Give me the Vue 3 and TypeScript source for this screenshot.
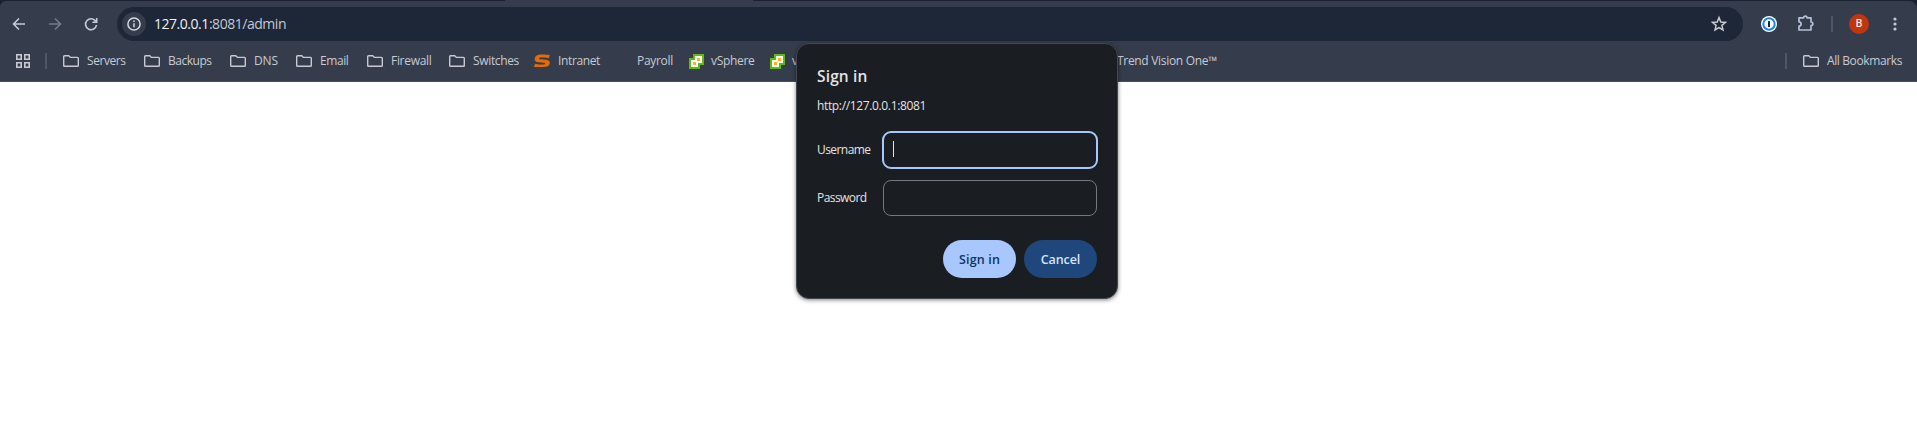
<script setup lang="ts">
interface Bookmark {
  label: string
  icon: 'folder' | 's' | 'vm' | 'none'
  pitch: number
  text: number
}

const bookmarks: Bookmark[] = [
  { label: 'Servers', icon: 'folder', pitch: 81, text: 38.5 },
  { label: 'Backups', icon: 'folder', pitch: 86, text: 43.5 },
  { label: 'DNS', icon: 'folder', pitch: 66, text: 24 },
  { label: 'Email', icon: 'folder', pitch: 71, text: 28.5 },
  { label: 'Firewall', icon: 'folder', pitch: 82, text: 40.5 },
  { label: 'Switches', icon: 'folder', pitch: 85, text: 46 },
  { label: 'Intranet', icon: 's', pitch: 79, text: 42 },
  { label: 'Payroll', icon: 'none', pitch: 76, text: 36 },
  { label: 'vSphere', icon: 'vm', pitch: 81, text: 43.5 },
  { label: 'v', icon: 'vm', pitch: 323, text: 6 },
  { label: 'Trend Vision One™', icon: 'none', pitch: 140, text: 100 },
]

const ctx = document.createElement('canvas').getContext('2d')

// Letter spacing that makes a label as wide as its slot.
function fit(label: string, width: number, size = 12, weight = 400) {
  if (!ctx) return {}
  ctx.font = `${weight} ${size}px "Open Sans"`
  const extra = (width - ctx.measureText(label).width) / label.length
  return { letterSpacing: `${extra.toFixed(3)}px` }
}
</script>

<template>
  <div class="browser">
    <div class="strip"><i class="left"></i><i class="right"></i></div>
    <div class="toolbar">
      <svg class="nav" viewBox="0 0 16 16"><path d="M14 8H3M8 2.5 2.5 8 8 13.5" /></svg>
      <svg class="nav dim" viewBox="0 0 16 16"><path d="M2 8h11M8 2.5 13.5 8 8 13.5" /></svg>
      <svg class="nav reload" viewBox="0 0 16 16"><path d="M12.8 5.4A5.5 5.5 0 1 0 13.5 9M13.7 2v4.2H9.4" /></svg>
      <div class="omnibox">
        <span class="info">
          <svg viewBox="0 0 16 16"><circle cx="8" cy="8" r="6.1" /><path d="M8 7.2v4M8 4.6v1.5" /></svg>
        </span>
        <span class="url" :style="fit('127.0.0.1:8081/admin', 132, 14)"><b>127.0.0.1</b>:8081/admin</span>
        <svg class="star" viewBox="0 0 16 16">
          <path d="M8 1.6 9.8 6l4.7.4-3.6 3 1.1 4.6L8 11.6 4 14l1.1-4.6-3.6-3L6.2 6Z" />
        </svg>
      </div>
      <svg class="onepass" viewBox="0 0 16 16">
        <circle cx="8" cy="8" r="8" fill="#fff" />
        <circle cx="8" cy="8" r="5.7" stroke="#1a85f5" stroke-width="2" />
        <rect x="7" y="5" width="2" height="6" rx=".5" fill="#172333" />
      </svg>
      <svg class="puzzle" viewBox="0 0 18 18">
        <path d="M2 3.8h4.6a1.7 1.7 0 0 1 3.4 0h4v4.2a1.7 1.7 0 0 1 0 3.6V16H2v-4a2.1 2.1 0 0 0 0-4.2Z" />
      </svg>
      <i class="rule"></i>
      <span class="avatar">B</span>
      <svg class="dots" viewBox="0 0 4 14"><circle cx="2" cy="2" r="1.6" /><circle cx="2" cy="7" r="1.6" /><circle cx="2" cy="12" r="1.6" /></svg>
    </div>
    <div class="bookmarks">
      <svg class="apps" viewBox="0 0 14 14">
        <path d="M.8.8h4.4v4.4H.8ZM8.8.8h4.4v4.4H8.8ZM.8 8.8h4.4v4.4H.8ZM8.8 8.8h4.4v4.4H8.8Z" />
      </svg>
      <i class="rule"></i>
      <div class="items">
        <div v-for="(b, i) in bookmarks" :key="i" class="bookmark" :style="{ width: b.pitch + 'px' }">
          <svg v-if="b.icon === 'folder'" class="folder" viewBox="0 0 16 12">
            <path d="M.7 1.5q0-.8.8-.8h4.2l1.7 1.7h7.1q.8 0 .8.8v7.3q0 .8-.8.8H1.5q-.8 0-.8-.8Z" />
          </svg>
          <svg v-else-if="b.icon === 's'" class="slot" viewBox="0 0 16 16">
            <path fill="#e36b0a" d="M15.8 2 14.8 5.2 11 4.5H7Q5 4.5 5 5.4T6.5 6.3L11.5 6.8Q15.800 7.2 15.8 9.8 15.8 14 9.5 14H0L1 10.8 5 11.600H9.5Q11.2 11.600 11.2 10.600T9.7 9.700L4.5 9.200Q.6 8.800.6 6.500.6 2.300 6 1.600 11 1 15.8 2Z" />
          </svg>
          <svg v-else-if="b.icon === 'vm'" class="slot vm" viewBox="0 0 15 15" shape-rendering="crispEdges">
            <path fill="#61b80e" d="M4 0h11v11h-4v4H0V4h4Z" />
            <path fill="#fff" d="M6 2h7v7H9v4H2V6h4Z" />
            <path fill="#fcb316" d="M8 4h3v3H8ZM4 8h3v3H4Z" />
          </svg>
          <i v-else class="slot"></i>
          <span :style="fit(b.label, b.text)">{{ b.label }}</span>
        </div>
      </div>
      <div class="all">
        <i class="rule"></i>
        <svg class="folder" viewBox="0 0 16 12">
          <path d="M.7 1.5q0-.8.8-.8h4.2l1.7 1.7h7.1q.8 0 .8.8v7.3q0 .8-.8.8H1.5q-.8 0-.8-.8Z" />
        </svg>
        <span :style="fit('All Bookmarks', 75)">All Bookmarks</span>
      </div>
    </div>

    <form class="dialog" @submit.prevent>
      <h1 :style="fit('Sign in', 50.5, 15.5, 600)">Sign in</h1>
      <p :style="fit('http://127.0.0.1:8081', 109)">http://127.0.0.1:8081</p>
      <div class="row">
        <label :style="fit('Username', 53.5)">Username</label>
        <div class="field focus"><i class="caret"></i></div>
      </div>
      <div class="row">
        <label :style="fit('Password', 49.5)">Password</label>
        <div class="field"></div>
      </div>
      <div class="actions">
        <button class="primary"><span :style="fit('Sign in', 41, 12.5, 600)">Sign in</span></button>
        <button><span :style="fit('Cancel', 39.5, 12.5, 600)">Cancel</span></button>
      </div>
    </form>
  </div>
</template>

<style>
body { margin: 0; background: #fff; overflow: hidden; }
</style>

<style scoped>
* { box-sizing: border-box; }
.browser { position: relative; width: 1917px; height: 446px; background: linear-gradient(#192132 0 20px, #fff 20px); font: 12px/16px "Open Sans", "Noto Sans", sans-serif; color: #c7cad1; }
svg { display: block; flex: none; fill: none; overflow: visible; }
i { display: block; flex: none; }
.strip { display: flex; justify-content: space-between; height: 1px; background: #353d4d; }
.strip .left { width: 505px; background: #192132; }
.strip .right { width: 1164px; background: #192132; }
.toolbar { display: flex; align-items: center; height: 46px; background: #353d4d; padding-left: 11px; border-radius: 6px 8px 0 0; }
.nav { width: 16px; height: 16px; margin-right: 20px; stroke: #c0cbdc; stroke-width: 1.6; }
.nav.dim { stroke: #737b88; }
.nav.reload { margin-right: 18px; }
.omnibox { display: flex; align-items: center; width: 1626px; height: 34px; border-radius: 17px; background: #1e2737; padding: 0 16px 0 5px; }
.info { display: flex; align-items: center; justify-content: center; width: 24px; height: 24px; border-radius: 50%; background: #353d4d; }
.info svg { width: 16px; height: 16px; stroke: #d3d8e2; stroke-width: 1.5; }
.url { margin-left: 8px; font-size: 14px; line-height: 20px; color: #c4c8cf; white-space: nowrap; }
.url b { font-weight: 400; color: #edf0f5; }
.star { width: 16px; height: 16px; margin-left: auto; stroke: #c7cad1; stroke-width: 1.5; }
.onepass { width: 16px; height: 16px; margin-left: 18px; }
.puzzle { width: 18px; height: 18px; margin: -2px 0 0 20px; stroke: #b4c0d6; stroke-width: 1.7; stroke-linejoin: round; }
.rule { width: 2px; height: 16px; background: #4e5766; }
.toolbar .rule { margin-left: 16px; }
.avatar { width: 20px; height: 20px; margin-left: 16px; border-radius: 50%; background: #c1360d; color: #fbe9e4; font: 500 10.5px/20px Roboto, sans-serif; text-align: center; }
.dots { width: 4px; height: 14px; margin-left: 24px; fill: #c0cbdc; }
.bookmarks { display: flex; align-items: center; height: 35px; padding: 0 15px 6px 16px; border-bottom: 1px solid #4a4e55; background: #353d4d; }
.apps { width: 14px; height: 14px; stroke: #c7cad1; stroke-width: 1.6; }
.bookmarks > .rule { margin: 0 16px 0 15px; }
.items { display: flex; }
.bookmark { display: flex; align-items: center; gap: 8px; height: 18px; white-space: nowrap; }
.folder { width: 16px; height: 12px; stroke: #c7cad1; stroke-width: 1.4; }
.slot { width: 16px; height: 16px; }
.vm { width: 15px; height: 15px; margin-right: -1px; }
.all { display: flex; align-items: center; margin-left: auto; }
.all .folder { margin: 0 8px 0 16px; }
.dialog { position: absolute; left: 796px; top: 43px; width: 322px; height: 256px; padding: 22px 19px 0 20px; border: 1px solid #43474e; border-radius: 13px; background: #1a1d21; box-shadow: 0 1px 4px rgba(0, 0, 0, .5); color: #e3e3e6; }
h1 { margin: 0; font-size: 15.5px; line-height: 20px; font-weight: 600; }
p { margin: 12px 0 17px; line-height: 16px; }
.row { display: flex; align-items: center; height: 38px; margin-bottom: 10px; }
label { width: 65px; white-space: nowrap; }
.field { width: 214px; height: 36px; margin-left: 1px; border: 1px solid #75787e; border-radius: 8px; }
.field.focus { display: flex; align-items: center; width: 216px; height: 38px; margin-left: 0; padding-left: 9px; border: 2px solid #a8c7fa; border-radius: 9px; }
.caret { width: 1px; height: 16px; margin-top: -2px; background: #e3e3e3; }
.actions { display: flex; justify-content: flex-end; gap: 8px; margin: 23px 1px 0 0; }
button { width: 73px; height: 38px; padding: 1px 0 0; border: 0; border-radius: 19px; background: #1f477b; color: #d3e3fd; font: 600 12.5px/18px "Open Sans", sans-serif; }
.primary { background: #a8c7fe; color: #0a3567; }
</style>
